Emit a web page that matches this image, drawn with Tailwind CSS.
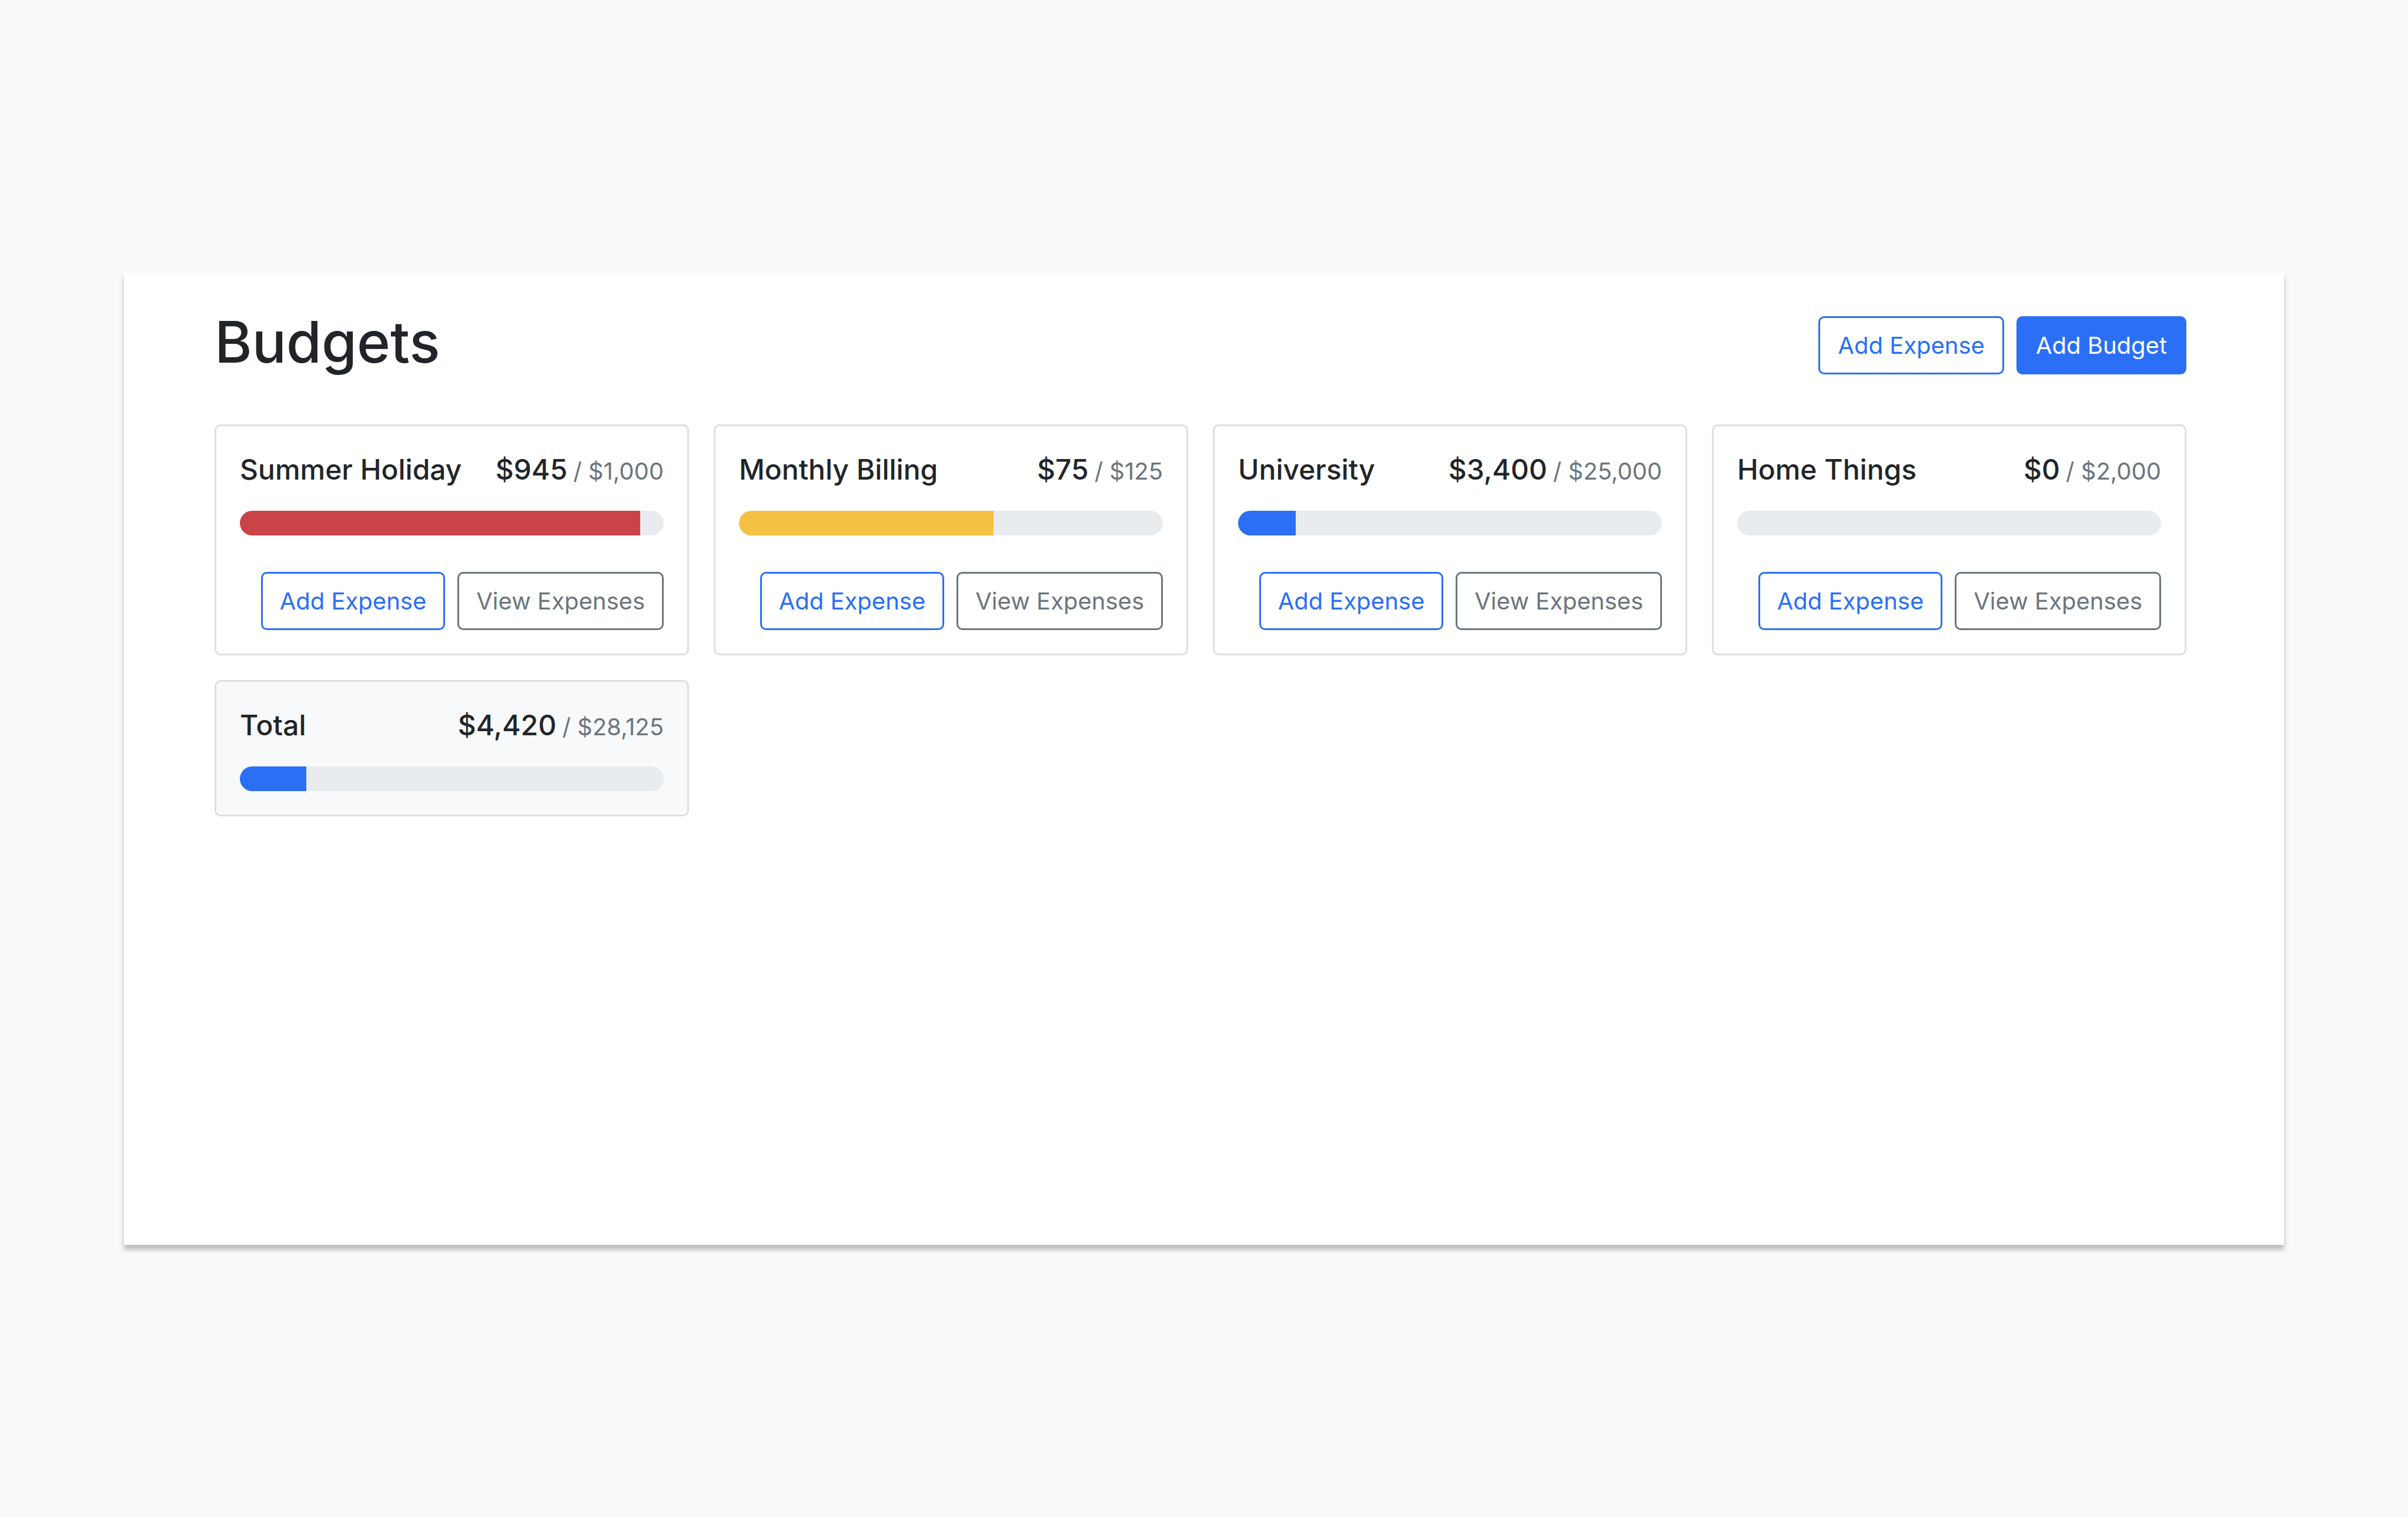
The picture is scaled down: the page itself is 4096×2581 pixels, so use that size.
<!DOCTYPE html>
<html lang="en">
<head>
<meta charset="utf-8">
<title>Budgets</title>
<script src="https://cdn.jsdelivr.net/npm/@tailwindcss/browser@4"></script>
</head>
<body class="min-h-screen bg-[#f8f9fb] font-['Inter',sans-serif] text-[40px] leading-[63px] text-[#212529] px-[211px] py-[464px]">
<main class="min-h-[1654px] bg-white pl-[154px] pr-[166px] pt-[74px] pb-[74px] shadow-[0_8px_8px_rgba(0,0,0,0.25)]">
  <header class="mb-[85px] flex items-center gap-[21px]">
    <h1 class="-mt-[12px] mr-auto text-[97px] leading-[99px] font-medium">Budgets</h1>
    <button type="button" class="h-[99px] rounded-[10px] border-[3px] border-[#2a6ff5] px-[30px] text-[#2a6ff5]">Add Expense</button>
    <button type="button" class="h-[99px] rounded-[10px] border-[3px] border-[#2a6ff5] bg-[#2a6ff5] px-[30px] text-white">Add Budget</button>
  </header>
  <div id="budgets" class="grid grid-cols-4 items-start gap-[42px]"></div>
</main>
<script>
  const budgets = [
    { name: 'Summer Holiday', spent: 945, max: 1000, color: 'bg-[#ca4349]' },
    { name: 'Monthly Billing', spent: 75, max: 125, color: 'bg-[#f4c145]' },
    { name: 'University', spent: 3400, max: 25000, color: 'bg-[#2a6ff5]' },
    { name: 'Home Things', spent: 0, max: 2000, color: 'bg-[#2a6ff5]' },
    { name: 'Total', spent: 4420, max: 28125, color: 'bg-[#2a6ff5]', total: true },
  ];
  const money = n => '$' + n.toLocaleString('en-US');
  document.getElementById('budgets').innerHTML = budgets.map(b => `
    <section class="rounded-[10px] border-[3px] border-[#dfdfdf] p-[40px] ${b.total ? 'bg-[#f8f9fb]' : 'bg-white'}">
      <div class="mb-[36px] flex items-baseline justify-between whitespace-nowrap text-[48px] leading-[68px] font-[450]">
        <h2>${b.name}</h2>
        <div>${money(b.spent)}<span class="ml-[10px] text-[40px] leading-none font-normal text-[#6c757d]">/ ${money(b.max)}</span></div>
      </div>
      <div role="progressbar" aria-label="${b.name}" aria-valuenow="${b.spent}" aria-valuemax="${b.max}" class="h-[42px] overflow-hidden rounded-full bg-[#e8ecef]">
        <div class="h-full ${b.color}" style="width:${b.spent / b.max * 100}%"></div>
      </div>
      ${b.total ? '' : `<div class="mt-[62px] flex justify-end gap-[21px]">
        <button type="button" class="h-[99px] rounded-[10px] border-[3px] border-[#2a6ff5] px-[29px] text-[#2a6ff5]">Add Expense</button>
        <button type="button" class="h-[99px] rounded-[10px] border-[3px] border-[#6c757d] px-[29px] text-[#6c757d]">View Expenses</button>
      </div>`}
    </section>`).join('');
</script>
</body>
</html>
